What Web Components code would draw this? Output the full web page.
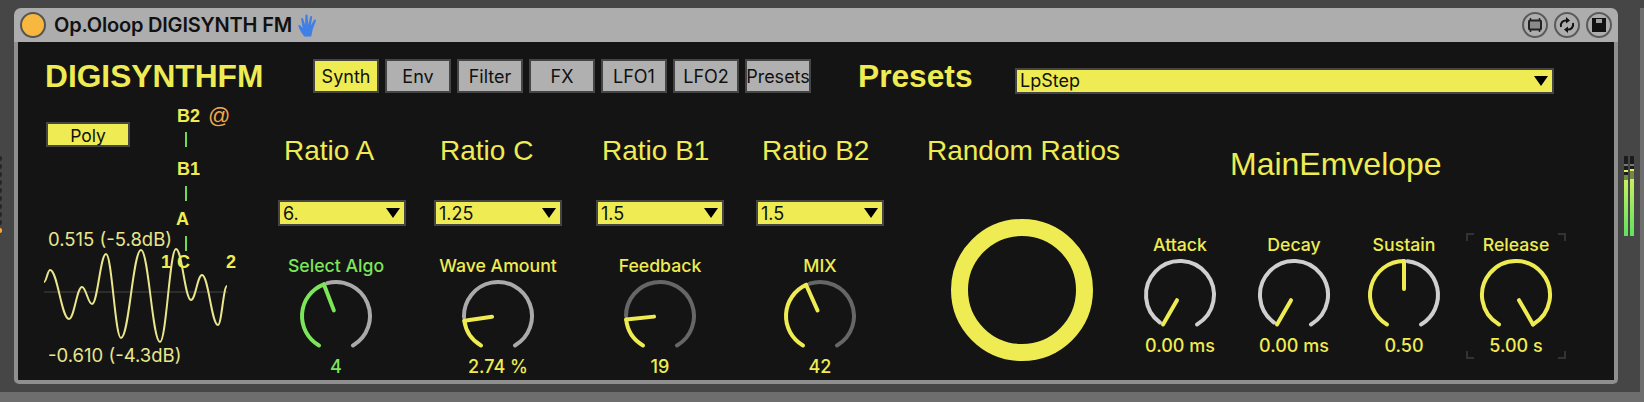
<!DOCTYPE html>
<html>
<head>
<meta charset="utf-8">
<title>Op.Oloop DIGISYNTH FM</title>
<style>
  html, body { margin: 0; height: 100%; }
  body { background: #464646; overflow: hidden; font-family: "Liberation Sans", Arial, sans-serif; }
  .row { display: flex; height: 392px; padding-top: 8px; box-sizing: border-box; }
  .floor { height: 10px; background: #6e6e6e; }
</style>
</head>
<body>

<template id="template-tab">
  <style>
    :host {
      display: flex; align-items: center; justify-content: center;
      box-sizing: border-box; width: 66px; height: 34px; padding-top: 1px;
      border: 2px solid #454545; background: #b0b0b0; color: #111;
      font: 18px "Inter", "Liberation Sans", sans-serif;
      white-space: nowrap;
    }
    :host([on]) { background: #eeec52; }
  </style>
  <slot></slot>
</template>

<template id="template-menu">
  <style>
    :host {
      display: flex; align-items: center; justify-content: space-between;
      box-sizing: border-box; height: 26px; padding: 0 4px 0 3px;
      border: 2px solid #454545; background: #eeec52; color: #111;
      font: 18px "Inter", "Liberation Sans", sans-serif;
    }
    i { width: 0; height: 0; border: 7px solid transparent; border-top: 10px solid #000; border-bottom: 0; }
  </style>
  <slot></slot><i></i>
</template>

<template id="template-knob">
  <style>
    :host {
      display: flex; flex-direction: column; align-items: center; position: relative; padding-top: 1px;
      color: #eeec52; font: 500 17.7px "Inter", "Liberation Sans", sans-serif;
    }
    :host([green]) { color: #7de55a; }
    .lb, .val { line-height: 20px; white-space: nowrap; }
    .val { font-size: 18px; }
    .dial { display: block; margin: 3px 0 6px; }
    .focus { position: absolute; left: 0; top: -1px; }
  </style>
  <div class="lb"><slot></slot></div>
  <svg class="dial" width="80" height="72" viewBox="-40 -37 80 72" fill="none" stroke-width="4"></svg>
  <div class="val"></div>
</template>

<template id="template-ratio">
  <style>
    :host { display: block; width: 128px; padding-top: 39px; }
    .h { height: 38px; line-height: 38px; font-size: 28px; color: #eeec52; white-space: nowrap; padding-left: 6px; }
    .m { margin-top: 30px; }
    .k { margin-top: 29px; }
  </style>
  <div class="h"></div>
  <synth-menu class="m"></synth-menu>
  <div class="k"><slot></slot></div>
</template>

<template id="template-scope">
  <style>
    :host { display: block; position: relative; width: 212px; height: 262px; font: bold 18px "Liberation Sans", sans-serif; color: #eeec52; }
    span { position: absolute; line-height: 20px; white-space: nowrap; }
    b { position: absolute; left: 160px; width: 2px; height: 15px; background: #6fd94f; }
    .read { font: 18.5px "Inter", "Liberation Sans", sans-serif; color: #e9e68c; left: 23px; }
    svg { position: absolute; left: 0; top: 0; }
  </style>
  <svg width="212" height="262" viewBox="25 108 212 262" fill="none">
    <path stroke="#2c2c2c" stroke-width="2" d="M44 292H228"/>
    <path class="wave" stroke="#e9e68c" stroke-width="2"/>
  </svg>
  <span style="left:152px;top:-2px">B2</span>
  <span style="left:183px;top:-2px;color:#f0a94a;font-size:22px;font-weight:normal">@</span>
  <b style="top:24px"></b>
  <span style="left:152px;top:51px">B1</span>
  <b style="top:78px"></b>
  <span style="left:151px;top:101px">A</span>
  <b style="top:128px"></b>
  <span style="left:136px;top:144px">1</span>
  <span style="left:152px;top:144px">C</span>
  <span style="left:201px;top:144px">2</span>
  <span class="read" style="top:120px">0.515 (-5.8dB)</span>
  <span class="read" style="top:236px">-0.610 (-4.3dB)</span>
</template>

<template id="template-rig">
  <style>
    :host { display: block; padding-top: 17px; font-family: "Liberation Sans", sans-serif; color: #eeec52; }
    .top { display: flex; align-items: center; height: 34px; padding-left: 27px; }
    .title { width: 268px; font-weight: bold; font-size: 31.7px; }
    .tabs { display: flex; gap: 6px; }
    .pre { margin-left: 47px; width: 157px; font-weight: bold; font-size: 31.7px; }
    .lp { width: 539px; margin-top: 9px; }
    .low { display: flex; }
    .left { display: grid; width: 260px; }
    .left > * { grid-area: 1 / 1; justify-self: start; align-self: start; }
    .poly { margin: 29px 0 0 28px; width: 84px; height: 25px; font-size: 17.5px; }
    synth-scope { margin: 15px 0 0 7px; }
    .ratios { display: flex; }
    .rand { width: 202px; margin-left: 43px; padding-top: 39px; }
    .rand div { font-size: 28px; line-height: 38px; white-space: nowrap; }
    .rand svg { display: block; margin: 49px 0 0 24px; }
    .env { margin-left: 1px; padding-top: 52px; }
    .env .hd { font-size: 32px; line-height: 38px; padding-left: 100px; white-space: nowrap; }
    .knobs { display: flex; margin-top: 51px; }
    .knobs synth-knob { width: 100px; }
  </style>
  <div class="top">
    <div class="title">DIGISYNTHFM</div>
    <div class="tabs">
      <synth-tab on>Synth</synth-tab><synth-tab>Env</synth-tab><synth-tab>Filter</synth-tab><synth-tab>FX</synth-tab><synth-tab>LFO1</synth-tab><synth-tab>LFO2</synth-tab><synth-tab>Presets</synth-tab>
    </div>
    <div class="pre">Presets</div>
    <synth-menu class="lp">LpStep</synth-menu>
  </div>
  <div class="low">
    <div class="left">
      <synth-tab on class="poly">Poly</synth-tab>
      <synth-scope></synth-scope>
    </div>
    <div class="ratios">
      <synth-ratio name="Ratio A" ratio="6."><synth-knob green angle="-21" value="4" style="margin-left:-12px">Select Algo</synth-knob></synth-ratio>
      <synth-ratio name="Ratio C" ratio="1.25" style="margin-left:28px"><synth-knob angle="-98" value="2.74 %">Wave Amount</synth-knob></synth-ratio>
      <synth-ratio name="Ratio B1" ratio="1.5" style="margin-left:34px"><synth-knob angle="-96" rest="#666" value="19">Feedback</synth-knob></synth-ratio>
      <synth-ratio name="Ratio B2" ratio="1.5" style="margin-left:32px"><synth-knob angle="-24" rest="#666" value="42">MIX</synth-knob></synth-ratio>
    </div>
    <div class="rand">
      <div>Random Ratios</div>
      <svg width="142" height="142" viewBox="0 0 142 142" fill="none"><circle cx="71" cy="71" r="62.500" stroke="#eeec52" stroke-width="17"/></svg>
    </div>
    <div class="env">
      <div class="hd">MainEmvelope</div>
      <div class="knobs">
        <synth-knob angle="-150" rest="#cfcfcf" value="0.00 ms">Attack</synth-knob>
        <synth-knob angle="-150" rest="#cfcfcf" value="0.00 ms" style="margin-left:14px">Decay</synth-knob>
        <synth-knob angle="0" rest="#cfcfcf" value="0.50" style="margin-left:10px">Sustain</synth-knob>
        <synth-knob angle="150" rest="#cfcfcf" value="5.00 s" focus style="margin-left:12px">Release</synth-knob>
      </div>
    </div>
  </div>
</template>

<template id="template-device">
  <style>
    :host { display: block; width: 1604px; flex: none; }
    .bar {
      display: flex; align-items: center; box-sizing: border-box; height: 34px; padding: 0 6px;
      background: #adadad; border-radius: 7px 7px 0 0;
      color: #111; font: 600 20px "Inter", "Liberation Sans", sans-serif;
    }
    .led { box-sizing: border-box; width: 26px; height: 26px; border-radius: 50%; background: #f8b73e; border: 2px solid #555; margin-right: 8px; }
    .ttl { letter-spacing: -.2px; margin-right: 6px; white-space: nowrap; }
    .sp { flex: 1; }
    .btns { display: flex; gap: 6px; }
    .btn { box-sizing: border-box; width: 26px; height: 26px; border-radius: 50%; border: 2px solid #5a5a5a; display: flex; align-items: center; justify-content: center; }
    .panel {
      box-sizing: border-box; height: 342px;
      background: #141414; border: 4px solid #8f8f8f; border-top: 0; border-radius: 0 0 5px 5px;
    }
  </style>
  <div class="bar">
    <span class="led"></span>
    <span class="ttl">Op.Oloop DIGISYNTH FM</span>
    <svg width="21" height="23" viewBox="0 0 20 22" preserveAspectRatio="none" fill="#3f7fe6">
      <path d="M6 21.500C4 19 1 15 .4 11.500.2 10.500 1.500 10.200 2.200 11L4.500 13.500 3 5C2.800 3.700 4.500 3.400 4.900 4.600L6.800 10.500 7 1.500C7 0 9 0 9.100 1.500L9.800 10.300 11.500 2.800C11.800 1.500 13.700 1.900 13.400 3.300L12.300 11 15.300 5.800C16 4.700 17.600 5.400 17 6.700L14 14.500C13.500 17 13.200 19 12.500 21.500Z"/>
    </svg>
    <span class="sp"></span>
    <div class="btns">
      <span class="btn"><svg width="16" height="16" viewBox="0 0 16 16" fill="none" stroke="#222" stroke-width="2"><rect x="2" y="3.500" width="12" height="9" rx="1" fill="#8a8a8a"/><path stroke-width="1.500" d="M3.500 1V3.500M12.500 1V3.500M3.500 12.500V15M12.500 12.500V15"/></svg></span>
      <span class="btn"><svg width="18" height="18" viewBox="0 0 18 18" fill="none" stroke="#111" stroke-width="2"><path d="M3 11C2 7 5 4 9 4.500"/><path d="M15 7c1 4-2 7-6 6.500"/><path fill="#111" stroke="none" d="M8 1l4 3.500-4 3zM10 17l-4-3.500 4-3z"/></svg></span>
      <span class="btn"><svg width="16" height="16" viewBox="0 0 16 16"><path fill="#111" d="M1 1H15V15H1Z"/><path fill="#a0a0a0" d="M5 2H11V6H5Z"/></svg></span>
    </div>
  </div>
  <div class="panel"><slot></slot></div>
</template>

<template id="template-gutter">
  <style>
    :host { display: block; width: 14px; flex: none; padding-top: 148px; box-sizing: border-box; }
    i { display: block; width: 2px; height: 5px; margin-bottom: 3px; background: #262626; border-radius: 0 2px 2px 0; }
    i:last-child { background: #f8a93a; }
  </style>
  <i></i><i></i><i></i><i></i><i></i><i></i><i></i><i></i><i></i><i></i>
</template>

<template id="template-meter">
  <style>
    :host { display: flex; gap: 2px; flex: none; width: 26px; box-sizing: border-box; margin-top: -8px; height: 400px; padding: 156px 0 0 6px; position: relative; }
    :host::after { content: ""; position: absolute; right: 0; top: 8px; bottom: 0; width: 4px; background: #6e6e6e; }
    div { width: 4px; display: flex; flex-direction: column; height: 80px; background: #1c1c1c; }
    i { display: block; flex: none; }
    .g { flex: 1; background: linear-gradient(#c9f062, #5fe15f); }
  </style>
  <div><i style="height:8px"></i><i style="height:2px;background:#777"></i><i style="height:4px"></i><i style="height:2px;background:#dff05a"></i><i style="height:3px"></i><i style="height:5px;background:#6f8a42"></i><i class="g"></i></div>
  <div><i style="height:8px"></i><i style="height:2px;background:#777"></i><i style="height:3px"></i><i style="height:2px;background:#dff05a"></i><i style="height:8px;background:#6f8a42"></i><i class="g"></i></div>
</template>

<script>
  // arc point, angle in degrees from the top of the knob
  function pt(r, a) {
    var t = a * Math.PI / 180;
    return (r * Math.sin(t)).toFixed(2) + ' ' + (-r * Math.cos(t)).toFixed(2);
  }
  function arc(a, b, col) {
    if (b <= a) return '';
    return '<path stroke="' + col + '" stroke-linecap="round" d="M' + pt(34, a) + 'A34 34 0 ' + (b - a > 180 ? 1 : 0) + ' 1 ' + pt(34, b) + '"/>';
  }
  function stamp(el, id) {
    el.attachShadow({ mode: 'open' }).appendChild(document.querySelector(id).content.cloneNode(true));
  }

  class SynthTab extends HTMLElement {
    constructor() { super(); stamp(this, '#template-tab'); }
  }
  customElements.define('synth-tab', SynthTab);

  class SynthMenu extends HTMLElement {
    constructor() { super(); stamp(this, '#template-menu'); }
  }
  customElements.define('synth-menu', SynthMenu);

  class SynthKnob extends HTMLElement {
    constructor() { super(); stamp(this, '#template-knob'); }
    connectedCallback() {
      var a = +this.getAttribute('angle');
      var on = this.hasAttribute('green') ? '#7de55a' : '#eeec52';
      var off = this.getAttribute('rest') || '#aaa';
      this.shadowRoot.querySelector('.dial').innerHTML = arc(a + 6, 150, off) + arc(-150, a, on) +
        '<path stroke="' + on + '" stroke-linecap="round" d="M' + pt(6, a) + 'L' + pt(34, a) + '"/>';
      this.shadowRoot.querySelector('.val').textContent = this.getAttribute('value');
      if (this.hasAttribute('focus')) {
        this.shadowRoot.querySelector('.val').insertAdjacentHTML('afterend',
          '<svg class="focus" width="100" height="126" fill="none" stroke="#333" stroke-width="2"><path d="M1 8V1H8M92 1H99V8M1 118V125H8M92 125H99V118"/></svg>');
      }
    }
  }
  customElements.define('synth-knob', SynthKnob);

  class SynthRatio extends HTMLElement {
    constructor() { super(); stamp(this, '#template-ratio'); }
    connectedCallback() {
      this.shadowRoot.querySelector('.h').textContent = this.getAttribute('name');
      this.shadowRoot.querySelector('.m').textContent = this.getAttribute('ratio');
    }
  }
  customElements.define('synth-ratio', SynthRatio);

  class SynthScope extends HTMLElement {
    constructor() {
      super();
      stamp(this, '#template-scope');
      // peaks and troughs of the trace, joined with flat tangents
      var p = [[44,282],[50,270],[69,319],[82,287],[92,304],[106,254],[121,338],[141,250],[160,342],[176,249],[191,300],[202,275],[218,325],[227,286]];
      var d = 'M' + p[0];
      for (var i = 1; i < p.length; i++) {
        var dx = (p[i][0] - p[i-1][0]) * 0.4;
        d += 'C' + (p[i-1][0] + dx) + ' ' + p[i-1][1] + ' ' + (p[i][0] - dx) + ' ' + p[i][1] + ' ' + p[i][0] + ' ' + p[i][1];
      }
      this.shadowRoot.querySelector('.wave').setAttribute('d', d);
    }
  }
  customElements.define('synth-scope', SynthScope);

  class SynthRig extends HTMLElement {
    constructor() { super(); stamp(this, '#template-rig'); }
  }
  customElements.define('synth-rig', SynthRig);

  class LiveDevice extends HTMLElement {
    constructor() { super(); stamp(this, '#template-device'); }
  }
  customElements.define('live-device', LiveDevice);

  class TrackGutter extends HTMLElement {
    constructor() { super(); stamp(this, '#template-gutter'); }
  }
  customElements.define('track-gutter', TrackGutter);

  class TrackMeter extends HTMLElement {
    constructor() { super(); stamp(this, '#template-meter'); }
  }
  customElements.define('track-meter', TrackMeter);
</script>

<div class="row">
  <track-gutter></track-gutter>
  <live-device><synth-rig></synth-rig></live-device>
  <track-meter></track-meter>
</div>
<div class="floor"></div>
</body>
</html>
